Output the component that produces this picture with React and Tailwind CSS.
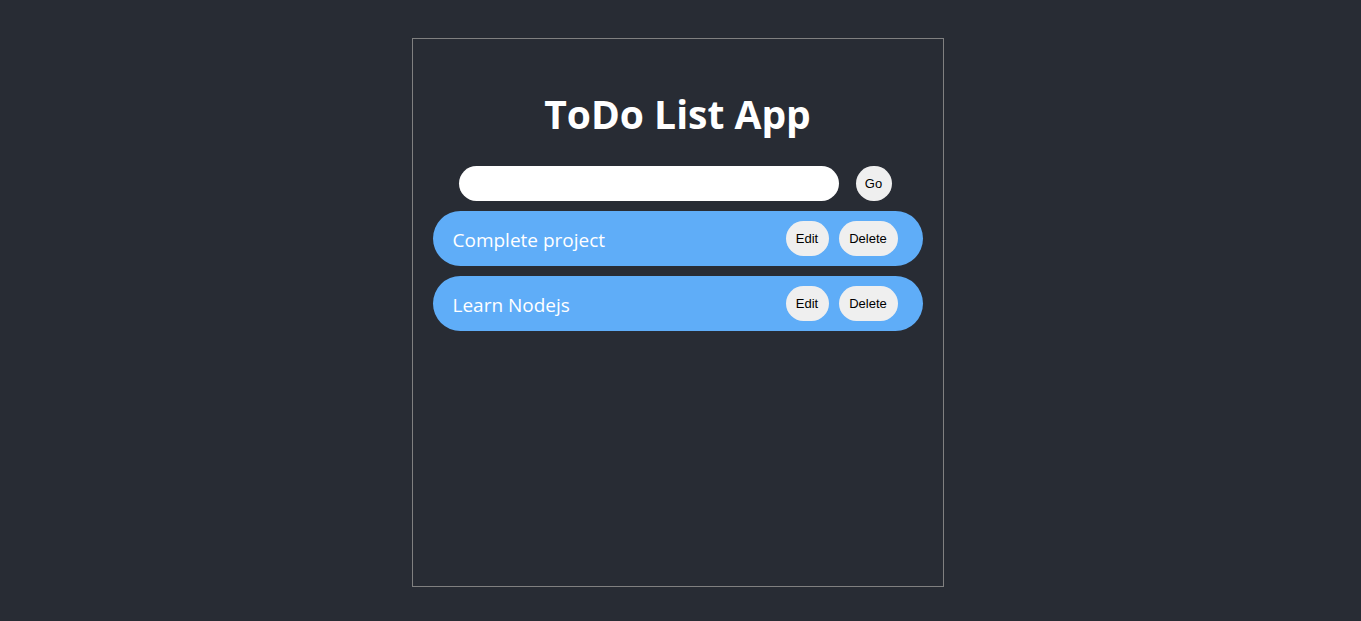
import React, { useState } from 'react'

const TodoApp = () => {
  const [todos] = useState(['Complete project', 'Learn Nodejs']);
  const [input, setInput] = useState('');

  return (
    <div className="min-h-screen bg-[#282c34] flex justify-center pt-[38px] pr-[6px]">
      <div className="w-[532px] h-[549px] border border-[#808080] px-5 flex flex-col">
        {/* Title */}
        <h1 className="mt-[45px] text-[39px] leading-[60px] font-bold text-center text-white font-['Open_Sans',sans-serif]">
          ToDo List App
        </h1>

        {/* Input */}
        <form className="flex items-center gap-[17px] ml-[26px] mt-[22px]" onSubmit={(e) => e.preventDefault()}>
          <input
            value={input}
            onChange={(e) => setInput(e.target.value)}
            className="w-[380px] h-[35px] rounded-full bg-white px-4 outline-none"
          />
          <button type="submit" className="w-9 h-[35px] rounded-full bg-[#efefef] text-black text-[13px] font-['Liberation_Sans',Arial,sans-serif]">
            Go
          </button>
        </form>

        {/* List */}
        <ul className="mt-[10px] flex flex-col gap-[10px]">
          {todos.map((todo) => (
            <li key={todo} className="h-[55px] rounded-full bg-[#5fadf8] flex items-center justify-between pl-5 pr-[25px]">
              <span className="text-white text-[19px] pt-[3px] font-['Open_Sans',sans-serif]">{todo}</span>
              <div className="flex gap-[10px]">
                <button className="w-[43px] h-[35px] rounded-full bg-[#efefef] text-black text-[13px] font-['Liberation_Sans',Arial,sans-serif]">
                  Edit
                </button>
                <button className="w-[59px] h-[35px] rounded-full bg-[#efefef] text-black text-[13px] font-['Liberation_Sans',Arial,sans-serif]">
                  Delete
                </button>
              </div>
            </li>
          ))}
        </ul>
      </div>
    </div>
  )
}

export default TodoApp
